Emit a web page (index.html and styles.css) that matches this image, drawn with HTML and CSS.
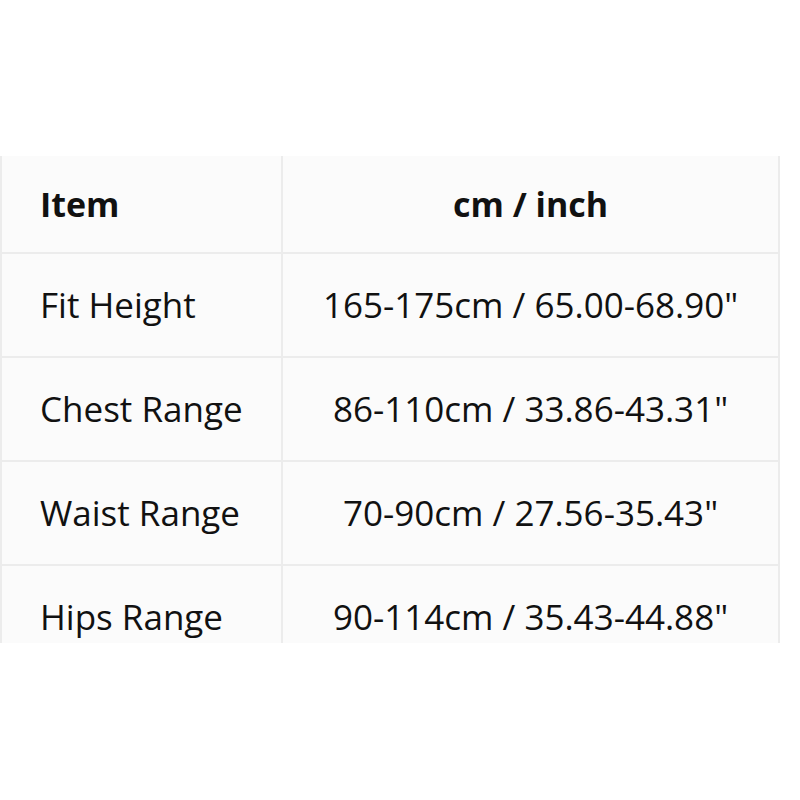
FILE: index.html
```html
<!DOCTYPE html>
<html lang="en">
<head>
<meta charset="utf-8">
<title>Size chart</title>
<link rel="stylesheet" href="styles.css">
</head>
<body>
<div class="frame">
  <table class="chart">
    <colgroup>
      <col class="col-item">
      <col class="col-value">
    </colgroup>
    <thead>
      <tr>
        <th class="item">Item</th>
        <th class="value">cm / inch</th>
      </tr>
    </thead>
    <tbody>
      <tr>
        <td class="item">Fit Height</td>
        <td class="value">165-175cm / 65.00-68.90"</td>
      </tr>
      <tr>
        <td class="item">Chest Range</td>
        <td class="value">86-110cm / 33.86-43.31"</td>
      </tr>
      <tr>
        <td class="item">Waist Range</td>
        <td class="value">70-90cm / 27.56-35.43"</td>
      </tr>
      <tr>
        <td class="item">Hips Range</td>
        <td class="value">90-114cm / 35.43-44.88"</td>
      </tr>
    </tbody>
  </table>
</div>
</body>
</html>
```
FILE: styles.css
```css
html, body {
  margin: 0;
  padding: 0;
  background: #ffffff;
}

body {
  font-family: "Open Sans", "Noto Sans", "DejaVu Sans", sans-serif;
  color: #111111;
}

.frame {
  margin-top: 156px;
  height: 487px;
  overflow: hidden;
}

.chart {
  width: 780px;
  table-layout: fixed;
  border-collapse: separate;
  border-spacing: 0;
  background: #fbfbfb;
  border-left: 2px solid #ececec;
  border-right: 2px solid #ececec;
}

.col-item {
  width: 281px;
}

.chart th,
.chart td {
  line-height: 40px;
  border-bottom: 2px solid #ececec;
  vertical-align: middle;
  padding: 0;
}

.chart th {
  font-size: 34px;
  font-weight: 700;
  height: 96px;
}

.chart td {
  font-size: 35px;
  font-weight: 400;
  height: 102px;
}

.chart .item {
  text-align: left;
  padding-left: 38px;
  border-right: 2px solid #ececec;
}

.chart .value {
  text-align: center;
}
```
